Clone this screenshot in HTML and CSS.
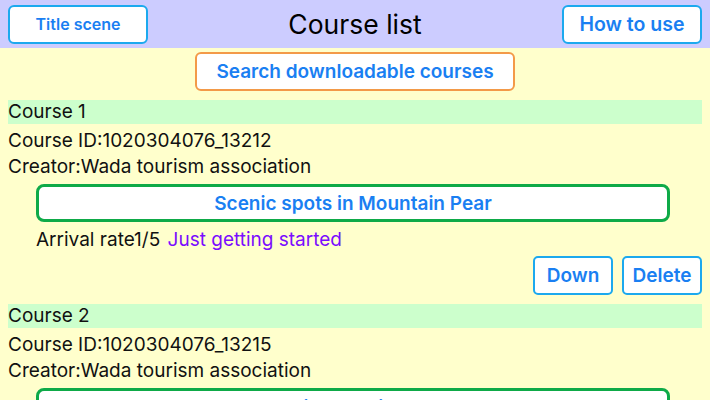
FILE: index.html
```html
<!DOCTYPE html>
<html lang="en">
<head>
  <meta charset="UTF-8" />
  <meta name="viewport" content="width=device-width, initial-scale=1.0"/>
  <title>Course list</title>
  <link rel="stylesheet" href="styles.css">
</head>
<body>

<div class="topbar">
  <button class="top-btn small">Title scene</button>
  <h1>Course list</h1>
  <button class="top-btn">How to use</button>
</div>

<div class="search-row">
  <button class="search-btn">Search downloadable courses</button>
</div>

<div class="course">
  <div class="course-head">Course 1</div>
  <div class="info">Course ID:1020304076_13212</div>
  <div class="info">Creator:Wada tourism association</div>
  <button class="course-btn">Scenic spots in Mountain Pear</button>
  <div class="rate">Arrival rate1/5 <span class="status">Just getting started</span></div>
  <div class="actions">
    <button class="act-btn">Down</button>
    <button class="act-btn">Delete</button>
  </div>
</div>

<div class="course">
  <div class="course-head">Course 2</div>
  <div class="info">Course ID:1020304076_13215</div>
  <div class="info">Creator:Wada tourism association</div>
  <button class="course-btn">Seal Wine Tourism spots</button>
</div>

</body>
</html>
```

FILE: styles.css
```css
body {
  margin: 0;
  background: #ffffcc;
  font-family: Inter, "Liberation Sans", Arial, sans-serif;
  color: #111;
  overflow: hidden;
}

button {
  font-family: inherit;
  cursor: pointer;
}

.topbar {
  display: flex;
  align-items: center;
  justify-content: space-between;
  height: 48px;
  padding: 0 8px;
  background: #ccccff;
}

.topbar h1 {
  margin: 0;
  font-size: 26.5px;
  font-weight: 400;
  color: #000;
}

.top-btn {
  width: 140px;
  height: 39px;
  background: #fff;
  border: 2px solid #1ca9ee;
  border-radius: 6px;
  color: #1a7ff2;
  font-size: 19.5px;
  font-weight: 600;
}

.top-btn.small {
  font-size: 16px;
}

.search-row {
  display: flex;
  justify-content: center;
  padding: 4px 0 9px;
}

.search-btn {
  width: 320px;
  height: 39px;
  background: #fff;
  border: 2px solid #f39a48;
  border-radius: 6px;
  color: #1a7ff2;
  font-size: 19px;
  font-weight: 600;
}

.course {
  display: flex;
  flex-direction: column;
  padding: 0 8px 9px;
}

.course-head {
  height: 24px;
  line-height: 24px;
  margin-bottom: 4px;
  background: #ccffcc;
  font-size: 19px;
}

.info {
  line-height: 26px;
  font-size: 19px;
}

.course-btn {
  margin: 4px 32px 0 28px;
  height: 38px;
  background: #fff;
  border: 3px solid #0eaa48;
  border-radius: 8px;
  color: #1a7ff2;
  font-size: 19px;
  font-weight: 600;
}

.rate {
  margin-top: 6px;
  padding-left: 28px;
  line-height: 24px;
  font-size: 19px;
}

.status {
  margin-left: 2px;
  color: #7a0cff;
}

.actions {
  display: flex;
  justify-content: flex-end;
  gap: 9px;
  margin-top: 4px;
}

.act-btn {
  width: 80px;
  height: 39px;
  background: #fff;
  border: 2px solid #1ca9ee;
  border-radius: 5px;
  color: #1a7ff2;
  font-size: 19px;
  font-weight: 600;
}
```
